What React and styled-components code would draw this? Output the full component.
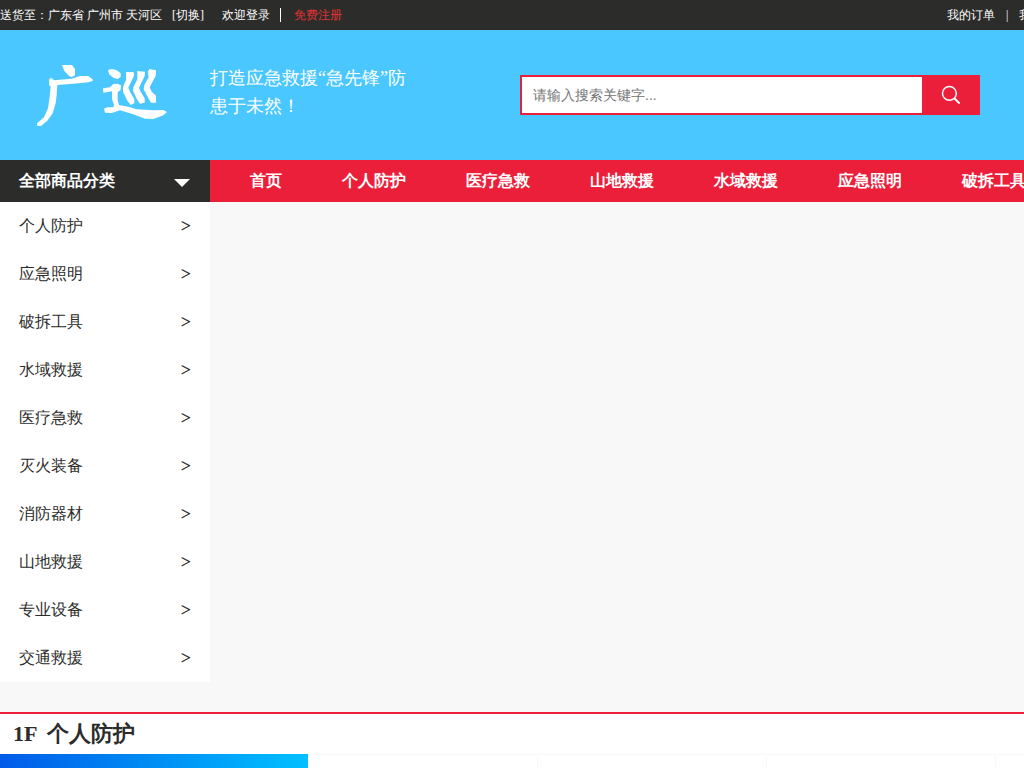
import styled, { createGlobalStyle } from 'styled-components';

const categories = [
  '个人防护',
  '应急照明',
  '破拆工具',
  '水域救援',
  '医疗急救',
  '灭火装备',
  '消防器材',
  '山地救援',
  '专业设备',
  '交通救援',
];

const navLinks = ['首页', '个人防护', '医疗急救', '山地救援', '水域救援', '应急照明', '破拆工具'];

const accountLinks = ['我的订单', '我的信息', '我的收藏', '客服'];

export default function App() {
  return (
    <Page>
      <GlobalStyle />
      <TopBar>
        <TopGroup>
          <span>送货至：广东省 广州市 天河区</span>
          <SwitchLink href="#city">[切换]</SwitchLink>
          <LoginLink href="#login">欢迎登录</LoginLink>
          <RegisterLink href="#register">免费注册</RegisterLink>
        </TopGroup>
        <AccountLinks>
          {accountLinks.map((label) => (
            <li key={label}>
              <TopLink href="#account">{label}</TopLink>
            </li>
          ))}
        </AccountLinks>
      </TopBar>

      <Header>
        <LogoLink href="#home" aria-label="广巡">
          <Logo />
        </LogoLink>
        <Slogan>打造应急救援“急先锋”防患于未然！</Slogan>
        <SearchForm onSubmit={(e) => e.preventDefault()}>
          <SearchInput type="text" aria-label="搜索" placeholder="请输入搜索关键字..." />
          <SearchButton type="submit" aria-label="搜索">
            <svg width="20" height="20" viewBox="0 0 20 20" fill="none" stroke="#fff">
              <circle cx="9.4" cy="8.4" r="6.9" strokeWidth="1.5" />
              <path d="M14.3 13.3L19.6 18.6" strokeWidth="2" />
            </svg>
          </SearchButton>
        </SearchForm>
      </Header>

      <NavBar>
        <CategoryTitle type="button">
          全部商品分类
          <Caret width="16" height="8" viewBox="0 0 16 8">
            <path d="M0 0H16L8 8Z" fill="#fff" />
          </Caret>
        </CategoryTitle>
        <NavLinks>
          {navLinks.map((label) => (
            <NavLink href="#nav" key={label}>{label}</NavLink>
          ))}
        </NavLinks>
      </NavBar>

      <CategoryMenu>
        {categories.map((label) => (
          <li key={label}>
            <CategoryLink href="#category">
              <span>{label}</span>
              <Arrow>&gt;</Arrow>
            </CategoryLink>
          </li>
        ))}
      </CategoryMenu>

      <Floor>
        <FloorTitle>
          <span>1F</span>
          <span>个人防护</span>
        </FloorTitle>
        <FloorContent>
          <Banner />
          <Product />
          <Product />
          <Product />
          <Product />
        </FloorContent>
      </Floor>
    </Page>
  );
}

function Logo() {
  return (
    <svg width="160" height="90" viewBox="0 0 480 270" fill="#fff">
      <path d="M126 45L156 45L165 57L165 76L155 81L148 79L133 63Z" />
      <path d="M88 86L95 84L102 91L155 86L180 78L205 78L218 88L218 93L205 97L160 101L112 105L110 135L107 160L98 190L82 212L63 228L52 228L51 220L72 202L84 175L89 140L92 110L87 105Z" />
      <path d="M264 60L275 57L290 61L302 70L302 80L293 87L280 83L268 73Z" />
      <path d="M249 115L270 112L280 102L292 101L303 106L302 120L293 127L293 150L297 165L325 170L350 178L400 181L430 180L441 186L430 196L400 207L375 206L340 193L300 181L275 189L255 188L252 176L262 172L280 172L282 165L276 148L276 124L250 128Z" />
      <path d="M318 66L341 66L342 77L325 113L330 125L343 148L343 160L332 165L322 152L309 125L309 110L318 90Z" />
      <path d="M352 63L375 65L374 78L357 113L362 125L374 145L374 158L360 161L352 150L339 122L340 112L352 88Z" />
      <path d="M388 57L408 61L407 78L389 112L395 125L408 137L408 158L393 158L385 145L371 118L373 105L386 82L384 65Z" />
    </svg>
  );
}

const GlobalStyle = createGlobalStyle`
  * {
    box-sizing: border-box;
  }

  html {
    scrollbar-width: none;
  }

  body {
    margin: 0;
    background: #f8f8f8;
    color: #2c2c2b;
    font-family: 'Liberation Serif', serif;
    font-size: 16px;
  }

  a {
    color: inherit;
    text-decoration: none;
  }

  ul {
    margin: 0;
    padding: 0;
    list-style: none;
  }
`;

const Page = styled.div`
  min-width: 1200px;
`;

const TopBar = styled.div`
  display: flex;
  align-items: center;
  justify-content: space-between;
  height: 30px;
  background: #2c2c2b;
  color: #fff;
  font-size: 12px;
`;

const TopGroup = styled.div`
  display: flex;
  align-items: center;
`;

const TopLink = styled.a`
  line-height: 14px;
`;

const SwitchLink = styled(TopLink)`
  margin: 0 18px 0 10px;
`;

const LoginLink = styled(TopLink)`
  padding-right: 10px;
  border-right: 1px solid #fff;
`;

const RegisterLink = styled(TopLink)`
  margin-left: 13px;
  color: #e33333;
`;

const AccountLinks = styled.ul`
  display: flex;
  width: 253px;
  white-space: nowrap;

  li + li::before {
    content: '|';
    margin: 0 11px;
  }
`;

const Header = styled.header`
  display: flex;
  align-items: center;
  height: 130px;
  background: #4bc7ff;
`;

const LogoLink = styled.a`
  display: flex;
  width: 210px;
  padding-left: 20px;
`;

const Slogan = styled.p`
  width: 210px;
  margin: 0 100px 6px 0;
  color: #fff;
  font-size: 18px;
  line-height: 28px;
`;

const SearchForm = styled.form`
  display: flex;
  width: 460px;
  height: 40px;
  border: 2px solid #ec1f3b;
  background: #ec1f3b;
`;

const SearchInput = styled.input`
  flex: 1;
  min-width: 0;
  padding: 0 11px;
  border: 0;
  outline: 0;
  background: #fff;
  font-family: 'Liberation Sans', sans-serif;
  font-size: 14px;

  &::placeholder {
    color: #757575;
  }
`;

const SearchButton = styled.button`
  display: flex;
  align-items: center;
  justify-content: center;
  width: 56px;
  padding: 0;
  border: 0;
  background: #ec1f3b;
  cursor: pointer;
`;

const NavBar = styled.nav`
  display: flex;
  height: 42px;
  background: #ec1f3b;
  color: #fff;
`;

const CategoryTitle = styled.button`
  display: flex;
  align-items: center;
  justify-content: space-between;
  width: 210px;
  padding: 0 20px 0 19px;
  border: 0;
  background: #2c2c2b;
  color: #fff;
  font-family: inherit;
  font-size: 16px;
  font-weight: bold;
`;

const Caret = styled.svg`
  margin-top: 4px;
`;

const NavLinks = styled.div`
  display: flex;
  align-items: center;
  gap: 60px;
  padding-left: 40px;
`;

const NavLink = styled.a`
  font-weight: bold;
  white-space: nowrap;
`;

const CategoryMenu = styled.ul`
  width: 210px;
  background: #fff;
`;

const CategoryLink = styled.a`
  display: flex;
  align-items: center;
  justify-content: space-between;
  height: 48px;
  padding: 0 19px;
`;

const Arrow = styled.span`
  font-size: 18px;
  font-weight: bold;
`;

const Floor = styled.section`
  margin-top: 30px;
  border-top: 2px solid #ec1f3b;
  background: #fff;
`;

const FloorTitle = styled.h2`
  display: flex;
  align-items: center;
  gap: 10px;
  height: 40px;
  margin: 0;
  padding-left: 13px;
  font-size: 22px;
`;

const FloorContent = styled.div`
  display: grid;
  grid-template-columns: 308px repeat(4, 229px);
  min-height: 240px;
  overflow: hidden;
`;

const Banner = styled.div`
  background: linear-gradient(90deg, #005be9, #00c0ff);
`;

const Product = styled.div`
  border-top: 1px solid #f8f8f8;

  & + & {
    border-left: 1px solid #f8f8f8;
  }
`;
